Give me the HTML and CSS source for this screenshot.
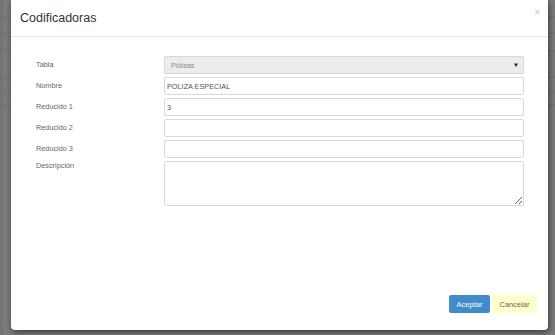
FILE: index.html
```html
<!DOCTYPE html>
<html lang="es">
<head>
    <meta charset="UTF-8">
    <title>Codificadoras</title>
    <link rel="stylesheet" href="styles.css">
</head>
<body>
    <div class="modal">
        <div class="modal-header">
            <h4 class="modal-title">Codificadoras</h4>
            <span class="close">&times;</span>
        </div>

        <form class="modal-body">
            <label>Tabla</label>
            <div class="select-box">
                <span>Pólizas</span>
                <svg class="caret" width="4" height="4" viewBox="0 0 4 4"><path d="M0 0.5h4L2 4z" fill="#222"/></svg>
            </div>

            <label>Nombre</label>
            <input type="text" value="POLIZA ESPECIAL">

            <label>Reducido 1</label>
            <input type="text" value="3">

            <label>Reducido 2</label>
            <input type="text">

            <label>Reducido 3</label>
            <input type="text">

            <label>Descripción</label>
            <textarea></textarea>
        </form>

        <div class="modal-footer">
            <button class="btn btn-primary">Aceptar</button>
            <button class="btn btn-cancel">Cancelar</button>
        </div>
    </div>
</body>
</html>
```

FILE: styles.css
```css
body {
    margin: 0;
    height: 335px;
    overflow: hidden;
    font-family: "Liberation Sans", Arial, sans-serif;
    background-color: #7b7b7b;
    background-image:
        linear-gradient(#727272, #727272),
        linear-gradient(#727272, #727272),
        linear-gradient(#727272, #727272),
        linear-gradient(#727272, #727272),
        linear-gradient(#727272, #727272),
        linear-gradient(#727272, #727272),
        linear-gradient(#737373, #737373);
    background-size: 100% 1px, 100% 1px, 100% 1px, 100% 1px, 100% 1px, 100% 1px, 3px 100%;
    background-position: 0 17px, 0 33px, 0 50px, 0 77px, 0 91px, 0 105px, 0 0;
    background-repeat: no-repeat;
    display: flex;
    padding-left: 11px;
}

.modal {
    width: 537px;
    height: 330px;
    background: #fff;
    border-radius: 0 0 4px 4px;
    box-shadow: 1px 2px 6px rgba(0, 0, 0, 0.55);
    display: flex;
    flex-direction: column;
}

.modal-header {
    height: 36px;
    border-bottom: 1px solid #e8e8e8;
    display: flex;
    justify-content: space-between;
    align-items: flex-start;
    padding: 0 8px 0 9px;
}

.modal-title {
    margin: 0;
    padding-top: 11px;
    font-size: 12.5px;
    font-weight: normal;
    color: #333;
}

.close {
    padding-top: 7px;
    font-size: 10px;
    color: #c4c4c4;
}

.modal-body {
    display: grid;
    grid-template-columns: 128px 360px;
    grid-auto-rows: 18px;
    row-gap: 3px;
    padding: 19px 0 0 25px;
    margin: 0;
}

.modal-body label {
    font-size: 7.3px;
    color: #666;
    line-height: 18px;
}

.modal-body label:last-of-type {
    line-height: 10px;
}

.modal-body input,
.select-box,
.modal-body textarea {
    box-sizing: border-box;
    width: 360px;
    height: 18px;
    margin: 0;
    border: 1px solid #d9d9d9;
    border-radius: 2px;
    font-family: "Liberation Sans", Arial, sans-serif;
    font-size: 7.3px;
    color: #555;
    padding: 0 0 0 2px;
    outline: none;
}

.select-box {
    background: #ececec;
    display: flex;
    justify-content: space-between;
    align-items: center;
    padding: 0 5px 0 6px;
    color: #888;
}

.caret {
    flex: none;
}

.modal-body textarea {
    height: 45px;
    grid-row: span 3;
    resize: vertical;
}

.modal-footer {
    margin-top: auto;
    display: flex;
    justify-content: flex-end;
    gap: 2px;
    padding: 0 11px 17px 0;
}

.btn {
    height: 18px;
    border: none;
    border-radius: 2px;
    font-family: "Liberation Sans", Arial, sans-serif;
    font-size: 7.5px;
    padding: 0;
}

.btn-primary {
    width: 41px;
    background: #428bca;
    color: #fff;
}

.btn-cancel {
    width: 45px;
    background: #ffffcc;
    color: #666;
}
```
